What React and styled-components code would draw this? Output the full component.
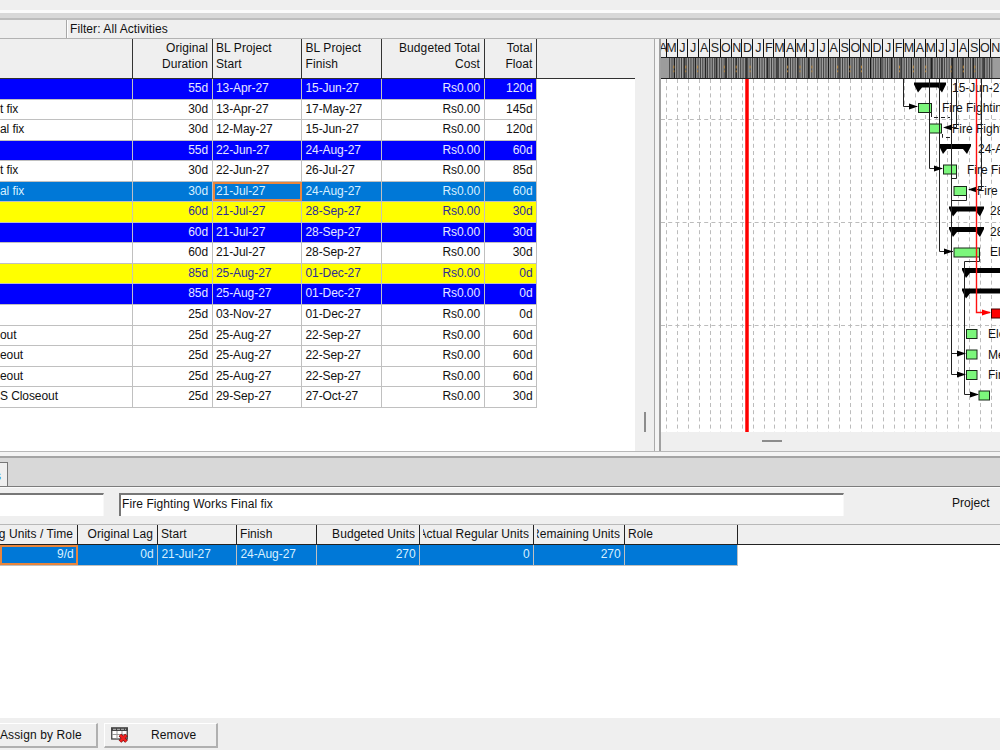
// src/pages/schedule/index.jsx
import styled, { createGlobalStyle } from "styled-components";

const GlobalStyle = createGlobalStyle`
  * {
    box-sizing: border-box;
  }
  body {
    margin: 0;
    overflow: hidden;
    background: #efefef;
    font-family: "Liberation Sans", Arial, sans-serif;
    font-size: 12px;
    color: #111;
  }
`;

const Window = styled.div`
  width: 1000px;
  height: 750px;
  display: flex;
  flex-direction: column;
  overflow: hidden;
  background: #efefef;
`;

const Toolbar = styled.div`
  height: 13px;
  flex: none;
  border-bottom: 3px solid #fafafa;
`;

const ToolbarEdge = styled.div`
  height: 7px;
  flex: none;
  background: #d8d8d8;
  border-bottom: 2px solid #bcbcbc;
`;

const FilterBar = styled.div`
  display: flex;
  height: 19px;
  flex: none;
  border-bottom: 1px solid #b2b2b2;
  line-height: 18px;
`;

const LayoutName = styled.div`
  width: 67px;
  border-right: 1px solid #a8a8a8;
`;

const FilterText = styled.div`
  flex: 1;
  padding-left: 2px;
  border-left: 1px solid #fff;
  letter-spacing: 0.08px;
`;

const Workspace = styled.div`
  display: flex;
  height: 412px;
  flex: none;
`;

const GridPane = styled.div`
  width: 635px;
  background: #fff;
`;

const HeaderRow = styled.div`
  display: flex;
  height: 40px;
  background: #efefef;
  border-bottom: 1.5px solid #303030;
`;

const HeaderCell = styled.div`
  width: ${({ $width }) => $width}px;
  padding: 1px 3.5px 0;
  line-height: 16px;
  text-align: ${({ $right }) => ($right ? "right" : "left")};
  border-right: 1px solid #333;
  letter-spacing: 0.08px;
  white-space: pre-line;
`;

const rowColors = {
  plain: ["#fff", "#111"],
  blue: ["#0000ff", "#e8e8ff"],
  yellow: ["#ffff00", "#2c2c9c"],
  selected: ["#0078d7", "#d8f0ff"],
};

const ActivityRow = styled.div`
  display: flex;
  width: 537px;
  height: 20.56px;
  background: ${({ $kind }) => rowColors[$kind][0]};
  color: ${({ $kind }) => rowColors[$kind][1]};
  border-bottom: 1px solid #c0c0c0;
`;

const Cell = styled.div`
  width: ${({ $width }) => $width}px;
  padding: 0 3.5px;
  padding-left: ${({ $flush }) => ($flush ? 0 : 3.5)}px;
  line-height: 19px;
  text-align: ${({ $right }) => ($right ? "right" : "left")};
  border-right: 1px solid #c0c0c0;
  letter-spacing: -0.08px;
  white-space: nowrap;
  overflow: hidden;
  ${({ $active }) =>
    $active &&
    `
    outline: 2px solid #e8853c;
    outline-offset: -2px;
  `}
`;

const VerticalScroll = styled.div`
  display: flex;
  justify-content: center;
  align-items: flex-end;
  width: 19px;
  padding-bottom: 19px;
  background: #efefef;
`;

const Thumb = styled.div`
  width: ${({ $horizontal }) => ($horizontal ? 20 : 2)}px;
  height: ${({ $horizontal }) => ($horizontal ? 2 : 20)}px;
  background: #8c8c8c;
`;

const Splitter = styled.div`
  width: 7px;
  background: #f4f4f4;
  border-left: 1px solid #aaa;
  border-right: 2px solid #a0a0a0;
`;

const ChartPane = styled.div`
  width: 339px;
  overflow: hidden;
  background: #fff;
`;

const Months = styled.div`
  display: flex;
  height: 19px;
  background: #efefef;
  border-bottom: 1px solid #222;
`;

const Month = styled.div`
  flex: none;
  display: flex;
  justify-content: center;
  width: ${({ $width }) => $width}px;
  font-size: 12.5px;
  line-height: 18px;
  border-right: 1px solid #111;
  overflow: hidden;
  color: #222;
`;

const Weeks = styled.svg`
  display: block;
  background: #9c9c9c;
  border-bottom: 1px solid #222;
`;

const Chart = styled.svg`
  display: block;
  font-size: 12px;
`;

const HorizontalScroll = styled.div`
  height: 19px;
  padding: 8px 0 0 101px;
  background: #efefef;
`;

const PaneDivider = styled.div`
  height: 7px;
  flex: none;
  background: #f4f4f4;
  border-top: 1px solid #b8b8b8;
  border-bottom: 2px solid #a4a4a4;
`;

const TabStrip = styled.div`
  display: flex;
  align-items: flex-end;
  height: 29px;
  flex: none;
  background: #d8d8d8;
  border-bottom: 1px solid #7c7c7c;
`;

const Tab = styled.div`
  width: 8px;
  height: 24px;
  padding-top: 6px;
  background: #efefef;
  border-top: 1px solid #777;
  border-right: 1px solid #777;
  color: #1684e0;
  overflow: hidden;
  text-indent: -5px;
`;

const DetailBar = styled.div`
  display: flex;
  align-items: flex-start;
  height: 37px;
  flex: none;
  padding-top: 5px;
  border-top: 1px solid #fafafa;
`;

const Field = styled.div`
  width: ${({ $width }) => $width}px;
  height: 23px;
  margin-right: ${({ $gap }) => $gap}px;
  padding-left: 1px;
  background: #fff;
  border-top: 2px solid #777;
  border-left: ${({ $flush }) => ($flush ? "none" : "2px solid #777")};
  border-right: 1px solid #f8f8f8;
  line-height: 19px;
  letter-spacing: 0.08px;
`;

const FieldLabel = styled.div`
  line-height: 21px;
  letter-spacing: 0.05px;
`;

const ResourceHeader = styled.div`
  display: flex;
  height: 21px;
  flex: none;
  border-top: 1px solid #b8b8b8;
  border-bottom: 1px solid #222;
`;

const ResourceHeaderCell = styled.div`
  width: ${({ $width }) => $width}px;
  padding: 0 4px 0 ${({ $flush }) => ($flush ? 0 : 3)}px;
  border-right: 1px solid #222;
`;

// Right-aligned titles lose their first letter when the column is too narrow
const ResourceTitle = styled.div`
  display: flex;
  justify-content: ${({ $right }) => ($right ? "flex-end" : "flex-start")};
  line-height: 19px;
  white-space: nowrap;
  overflow: hidden;
  letter-spacing: 0.06px;
`;

const ResourceGrid = styled.div`
  height: 173px;
  flex: none;
  background: #fff;
`;

const ResourceRow = styled(ActivityRow)`
  width: 738px;
  height: 21px;
  padding: 0;
  line-height: 20px;
`;

const ButtonBar = styled.div`
  display: flex;
  flex: 1;
  padding-top: 5px;
  gap: 6px;
`;

const Button = styled.div`
  display: flex;
  align-items: center;
  width: ${({ $width }) => $width}px;
  height: 25px;
  gap: 22px;
  padding-left: ${({ $indent }) => $indent}px;
  border: 1px solid #fff;
  border-right: 2px solid #b0b0b0;
  border-bottom: 2px solid #b0b0b0;
  border-left-width: ${({ $indent }) => ($indent ? 1 : 0)}px;
  letter-spacing: 0.12px;
  white-space: nowrap;
`;

const columns = [
  { title: "", width: 133 },
  { title: "Original\nDuration", width: 79.5, right: true },
  { title: "BL Project\nStart", width: 89.5 },
  { title: "BL Project\nFinish", width: 80 },
  { title: "Budgeted Total\nCost", width: 102.5, right: true },
  { title: "Total\nFloat", width: 52.5, right: true },
];

const activities = [
  ["blue", "", "55d", "13-Apr-27", "15-Jun-27", "120d"],
  ["plain", "t fix", "30d", "13-Apr-27", "17-May-27", "145d"],
  ["plain", "al fix", "30d", "12-May-27", "15-Jun-27", "120d"],
  ["blue", "", "55d", "22-Jun-27", "24-Aug-27", "60d"],
  ["plain", "t fix", "30d", "22-Jun-27", "26-Jul-27", "85d"],
  ["selected", "al fix", "30d", "21-Jul-27", "24-Aug-27", "60d"],
  ["yellow", "", "60d", "21-Jul-27", "28-Sep-27", "30d"],
  ["blue", "", "60d", "21-Jul-27", "28-Sep-27", "30d"],
  ["plain", "", "60d", "21-Jul-27", "28-Sep-27", "30d"],
  ["yellow", "", "85d", "25-Aug-27", "01-Dec-27", "0d"],
  ["blue", "", "85d", "25-Aug-27", "01-Dec-27", "0d"],
  ["plain", "", "25d", "03-Nov-27", "01-Dec-27", "0d"],
  ["plain", "out", "25d", "25-Aug-27", "22-Sep-27", "60d"],
  ["plain", "eout", "25d", "25-Aug-27", "22-Sep-27", "60d"],
  ["plain", "eout", "25d", "25-Aug-27", "22-Sep-27", "60d"],
  ["plain", "S Closeout", "25d", "29-Sep-27", "27-Oct-27", "30d"],
];

const resourceColumns = [
  { title: "g Units / Time", value: "9/d", width: 78, right: true, active: true, flush: true },
  { title: "Original Lag", value: "0d", width: 80, right: true },
  { title: "Start", value: "21-Jul-27", width: 79 },
  { title: "Finish", value: "24-Aug-27", width: 80 },
  { title: "Budgeted Units", value: "270", width: 103, right: true },
  { title: "Actual Regular Units", value: "0", width: 114, right: true },
  { title: "Remaining Units", value: "270", width: 91, right: true },
  { title: "Role", value: "", width: 113 },
];

// Timescale: May 2025 to November 2027
const DAY = 0.3553;
const FIRST_MONTH = 5.5;
const months = Array.from({ length: 31 }, (_, i) => {
  const start = Date.UTC(2025, 4 + i, 1);
  const end = Date.UTC(2025, 5 + i, 1);
  const origin = Date.UTC(2025, 4, 1);
  return {
    letter: "JFMAMJJASOND"[(4 + i) % 12],
    x: FIRST_MONTH + ((start - origin) / 86400000) * DAY,
    width: ((end - start) / 86400000) * DAY,
  };
});

// Chart coordinates: 0,0 is the top left of the bar area
const summaries = [
  [253, 3.5, 32],
  [278, 65, 32],
  [288, 127.5, 35],
  [288, 148, 35],
  [301, 189, 60],
  [301, 209.5, 60],
];

const bars = [
  [257.5, 24.5, 13],
  [268.5, 45, 12],
  [282.5, 86, 13],
  [293, 107.5, 12.5],
  [293, 169, 25.5],
  [305.5, 250.5, 10.5],
  [305.5, 271, 10.5],
  [305.5, 291.5, 10.5],
  [318, 312, 10.5],
];

const labels = [
  [291, 12.5, "15-Jun-27"],
  [281, 33, "Fire Fighting"],
  [291, 53.5, "Fire Fighting"],
  [317, 74, "24-Aug-27"],
  [306, 94.5, "Fire Fighting"],
  [316, 116, "Fire Fighting"],
  [329, 136, "28-Sep-27"],
  [329, 156.5, "28-Sep-27"],
  [329, 177, "Electrical"],
  [327, 259, "Electrical"],
  [327, 279.5, "Mechanical"],
  [327, 300, "Fire"],
];

const links = [
  "M242.5 0V27.5H256",
  "M268.5 0V89.5H281",
  "M278.5 0V172.5H292",
  "M290.5 0V295.5H304M290.5 274.5H304",
  "M295.5 0V48.5H284",
  "M320.5 0V110.5H308",
  "M318.5 178V182.5H303.5V315.5H317",
  "M305.5 117V121.5H290.5",
  "M295.5 95V99.5H291",
];

// [tip x, y, direction]
const arrows = [
  [257, 27.5, 1],
  [282, 89.5, 1],
  [292, 172.5, 1],
  [305, 274.5, 1],
  [305, 295.5, 1],
  [318, 315.5, 1],
  [282, 48.5, -1],
  [307, 110.5, -1],
];

// Clipped day numbers that show between the week lines
const weekMarks = [5, 17.5, 30, 58, 70.5, 85, 124.5, 137.5, 150, 177, 190, 202, 242, 256.5, 269.5, 296, 309, 321];

function arrowPath([x, y, dir]) {
  return `M${x} ${y}L${x - 9 * dir} ${y - 3}V${y + 3}Z`;
}

function summaryPath([x, y, w]) {
  return `M${x} ${y}H${x + w}V${y + 2}L${x + w - 4} ${y + 10}L${x + w - 8} ${y + 5}H${x + 8}L${x + 4} ${y + 10}L${x} ${y + 2}Z`;
}

function WeekScale() {
  return (
    <Weeks width="339" height="21" viewBox="0 0 339 21">
      {Array.from({ length: 137 }, (_, i) => (
        <path key={i} d={`M${0.6 + i * 7 * DAY} 0V21`} stroke="#3a3a3a" />
      ))}
      {months.map((m) => (
        <path key={m.x} d={`M${Math.floor(m.x) + 0.5} 0V21`} stroke="#111" />
      ))}
      {weekMarks.map((x) => (
        <path key={x} d={`M${x} 8V11M${x} 13V15`} stroke="#c08a3c" />
      ))}
    </Weeks>
  );
}

function GanttChart() {
  return (
    <Chart width="339" height="353" viewBox="0 0 339 353">
      <g stroke="#bcbcbc" strokeDasharray="4 3.2" fill="none">
        {months.map((m) => (
          <path key={m.x} d={`M${Math.floor(m.x) + 0.5} 0V353`} />
        ))}
        {[40.5, 143.5, 246.5].map((y) => (
          <path key={y} d={`M0 ${y}H339`} />
        ))}
      </g>
      <path d="M86 0V353" stroke="#ff0000" strokeWidth="3.5" />
      {labels.map(([x, y, text]) => (
        <text key={y} x={x} y={y} fill="#111">
          {text}
        </text>
      ))}
      {summaries.map((s) => (
        <path key={s[1]} d={summaryPath(s)} />
      ))}
      {bars.map(([x, y, w]) => (
        <rect
          key={y}
          x={x}
          y={y}
          width={w}
          height="9"
          fill="#7cf77c"
          stroke="#182818"
        />
      ))}
      <g stroke="#222" fill="none">
        {links.map((d) => (
          <path key={d} d={d} />
        ))}
        <path d="M270.5 34V38.5H289M281.5 55V58.5H290" strokeDasharray="4 3" />
      </g>
      {arrows.map((a) => (
        <path key={a.join()} d={arrowPath(a)} />
      ))}
      <path d="M315.5 0V233.5H329" stroke="#ff1010" strokeWidth="1.4" fill="none" />
      <path d={arrowPath([330, 233.5, 1])} fill="#ff0000" />
      <rect x="330.5" y="230" width="20" height="9" fill="#ff0000" stroke="#400" />
    </Chart>
  );
}

function RemoveIcon() {
  return (
    <svg width="18" height="17" viewBox="0 0 18 17">
      <rect x="0.75" y="1" width="15.5" height="11" fill="#fff" stroke="#444" strokeWidth="1.3" />
      <path d="M0 0.5H17V4H0Z" fill="#444" />
      <path d="M2 2.3H15" stroke="#bbb" strokeDasharray="3 1" />
      <path d="M1 7.5H16M6 4V12M11 4V12" stroke="#999" />
      <path d="M9 8L15.5 14.5M15.5 8L9 14.5" stroke="#701010" strokeWidth="3.8" />
      <path d="M9.2 8.2L15.3 14.3M15.3 8.2L9.2 14.3" stroke="#f02020" strokeWidth="2.4" />
    </svg>
  );
}

function SchedulePage() {
  return (
    <Window>
      <GlobalStyle />
      <Toolbar />
      <ToolbarEdge />
      <FilterBar>
        <LayoutName />
        <FilterText>Filter: All Activities</FilterText>
      </FilterBar>

      <Workspace>
        <GridPane>
          <HeaderRow>
            {columns.map((c) => (
              <HeaderCell key={c.title} $width={c.width} $right={c.right}>
                {c.title}
              </HeaderCell>
            ))}
          </HeaderRow>
          {activities.map(([kind, name, duration, start, finish, float], i) => (
            <ActivityRow key={i} $kind={kind}>
              {[name, duration, start, finish, "Rs0.00", float].map((text, c) => (
                <Cell
                  key={c}
                  $width={columns[c].width}
                  $right={columns[c].right}
                  $active={kind === "selected" && c === 2}
                  $flush={c === 0}
                >
                  {text}
                </Cell>
              ))}
            </ActivityRow>
          ))}
        </GridPane>
        <VerticalScroll>
          <Thumb />
        </VerticalScroll>
        <Splitter />
        <ChartPane>
          <Months>
            <Month $width={FIRST_MONTH}>A</Month>
            {months.map((m) => (
              <Month key={m.x} $width={m.width}>
                {m.letter}
              </Month>
            ))}
          </Months>
          <WeekScale />
          <GanttChart />
          <HorizontalScroll>
            <Thumb $horizontal />
          </HorizontalScroll>
        </ChartPane>
      </Workspace>

      <PaneDivider />
      <TabStrip>
        <Tab>s</Tab>
      </TabStrip>
      <DetailBar>
        <Field $width={104} $gap={15} $flush />
        <Field $width={725} $gap={108}>
          Fire Fighting Works Final fix
        </Field>
        <FieldLabel>Project</FieldLabel>
      </DetailBar>
      <ResourceHeader>
        {resourceColumns.map((c) => (
          <ResourceHeaderCell key={c.title} $width={c.width} $flush={c.flush}>
            <ResourceTitle $right={c.right}>{c.title}</ResourceTitle>
          </ResourceHeaderCell>
        ))}
      </ResourceHeader>
      <ResourceGrid>
        <ResourceRow $kind="selected">
          {resourceColumns.map((c) => (
            <Cell key={c.title} $width={c.width} $right={c.right} $active={c.active}>
              {c.value}
            </Cell>
          ))}
        </ResourceRow>
      </ResourceGrid>
      <ButtonBar>
        <Button $width={98}>Assign by Role</Button>
        <Button $width={114} $indent={6}>
          <RemoveIcon />
          Remove
        </Button>
      </ButtonBar>
    </Window>
  );
}

export default SchedulePage;
